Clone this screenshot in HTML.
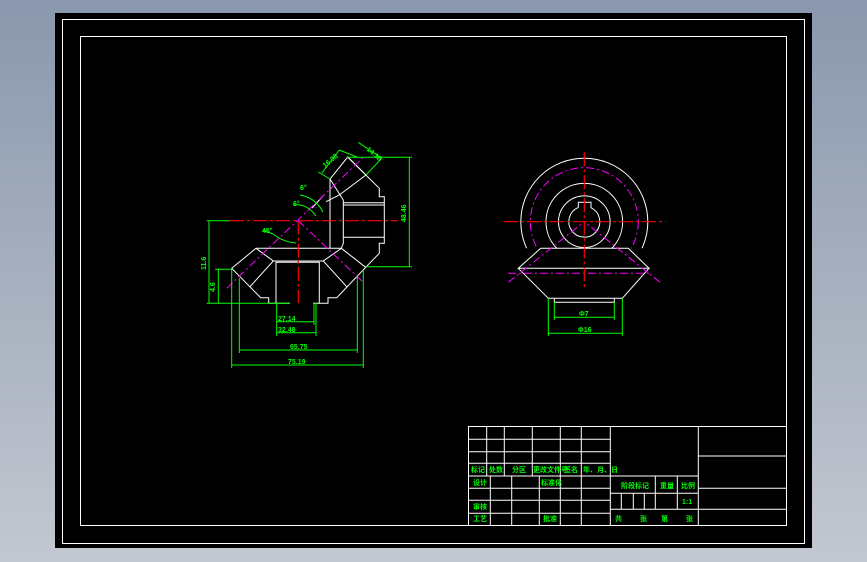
<!DOCTYPE html>
<html><head><meta charset="utf-8"><style>
html,body{margin:0;padding:0;width:867px;height:562px;overflow:hidden;background:linear-gradient(#8a98ad,#c3c7d0);}
svg{position:absolute;left:0;top:0}
text{font-family:"Liberation Sans","Noto Sans CJK SC",sans-serif;fill:#00ff00;font-weight:bold}
</style></head><body>
<svg width="867" height="562" viewBox="0 0 867 562">
<rect x="55" y="13" width="757" height="535" fill="#000"/>
<g fill="none" stroke="#fff" stroke-width="1">
<rect x="62.5" y="19.5" width="742" height="524"/>
<rect x="80.5" y="36.5" width="706" height="489"/>
</g>
<!-- LEFT VIEW -->
<g fill="none" stroke="#fff" stroke-width="1">
<polyline points="290,303.3 268.7,303.3 268.7,297.7 260.7,297.7 231.7,268.3 256,248.3 341.3,248.3 365.7,267.3 336.7,297.7 328,297.7 328,303.3 313,303.3"/>
<polyline points="256,248.3 273.3,261 250,286.7"/>
<polyline points="341.3,248.3 323.3,261 346.7,286.7"/>
<line x1="273.3" y1="261" x2="323.3" y2="261"/>
<polyline points="276,303.3 276,262.3 319.3,262.3 319.3,303.3"/>
<polyline points="365.7,267.3 379.3,253.3 379.3,243.3 384.3,243.3 384.3,196.7 379.3,196.7 379.3,188.3 347.7,157 330,179 330,248.3"/>
<line x1="347.7" y1="157" x2="366" y2="175"/>
<polyline points="366,175 339.3,195 326,201.7"/>
<polyline points="330,179 343.3,200 343.3,243.3 341.3,248.3"/>
<line x1="343.3" y1="202.7" x2="384.3" y2="202.7"/>
<line x1="343.3" y1="205" x2="384.3" y2="205"/>
<line x1="343.3" y1="237.3" x2="384.3" y2="237.3"/>
<line x1="312" y1="208" x2="323" y2="196"/>
</g>
<g stroke="#ff0000" stroke-width="1.2" stroke-dasharray="14,3,3,3">
<line x1="230" y1="220.7" x2="398" y2="220.7"/>
<line x1="298.3" y1="220.7" x2="298.3" y2="303.3"/>
</g>
<g stroke="#ff00ff" stroke-width="1" stroke-dasharray="8,3,2,3">
<line x1="226.7" y1="288.3" x2="363.3" y2="157.3"/>
<line x1="298.3" y1="220.7" x2="362.7" y2="281.7"/>
</g>
<g fill="none" stroke="#00ff00" stroke-width="1">
<line x1="206.7" y1="220.7" x2="230" y2="220.7"/>
<line x1="206.7" y1="303.3" x2="290" y2="303.3"/>
<line x1="209" y1="220.7" x2="209" y2="303.3"/>
<line x1="215" y1="269.3" x2="232" y2="269.3"/>
<line x1="218.3" y1="269.3" x2="218.3" y2="303.3"/>
<line x1="346.7" y1="157.3" x2="412" y2="157.3"/>
<line x1="365.7" y1="266.7" x2="412" y2="266.7"/>
<line x1="409.3" y1="157.3" x2="409.3" y2="266.7"/>
<line x1="231.7" y1="268.3" x2="231.7" y2="368"/>
<line x1="363.3" y1="270" x2="363.3" y2="368"/>
<line x1="239.3" y1="278" x2="239.3" y2="353"/>
<line x1="357.3" y1="276" x2="357.3" y2="353"/>
<line x1="276.7" y1="303" x2="276.7" y2="336"/>
<line x1="314" y1="303" x2="314" y2="325"/>
<line x1="316" y1="303" x2="316" y2="336"/>
<line x1="276.7" y1="321.7" x2="314" y2="321.7"/>
<line x1="276.7" y1="332.7" x2="316" y2="332.7"/>
<line x1="239.3" y1="350" x2="357.3" y2="350"/>
<line x1="231.7" y1="365" x2="363.3" y2="365"/>
<line x1="321.7" y1="173.3" x2="339.3" y2="150"/>
<line x1="330" y1="179" x2="318" y2="172"/>
<line x1="339.3" y1="150" x2="357" y2="157"/>
<line x1="358.3" y1="142.3" x2="381.7" y2="158.3"/>
<line x1="381.7" y1="158.3" x2="366" y2="175"/>
<path d="M300,195 Q316,198 323,212"/>
<path d="M293,205 Q307,203 316,216"/>
<path d="M273,234 Q283,242 296,243"/>
<line x1="263" y1="230" x2="273" y2="234"/>
</g>
<g font-size="7">
<text x="278" y="321">27.14</text>
<text x="278" y="332">32.48</text>
<text x="290" y="349">65.75</text>
<text x="288" y="364">75.19</text>
<text x="262" y="233">45°</text>
<text x="300" y="190">6°</text>
<text x="293" y="206">6°</text>
<text transform="translate(406,222) rotate(-90)">48.46</text>
<text transform="translate(206,270) rotate(-90)">11.6</text>
<text transform="translate(215,292) rotate(-90)">4.6</text>
<text transform="translate(325,168) rotate(-40)">16.98</text>
<text transform="translate(366,150) rotate(40)">14.18</text>
</g>
<!-- RIGHT VIEW -->
<defs><clipPath id="c"><rect x="480" y="140" width="200" height="108.3"/></clipPath></defs>
<g fill="none" stroke="#fff" stroke-width="1">
<g clip-path="url(#c)">
<circle cx="584.3" cy="221.7" r="63.5"/>
<circle cx="584.3" cy="221.7" r="38.3"/>
<circle cx="584.3" cy="221.7" r="25.8"/>
</g>
<path d="M578.3,207.4 L578.3,202.3 L591,202.3 L591,207.7 A15.5,15.5 0 1 1 578.3,207.4"/>
<polyline points="540.7,248.3 628.3,248.3 649,268.3 518.3,268.3 540.7,248.3"/>
<polyline points="518.3,268.3 548.3,298.3 622.3,298.3 649,268.3"/>
<polyline points="554.3,298.3 554.3,302.3 614.3,302.3 614.3,298.3"/>
</g>
<g fill="none" stroke="#ff00ff" stroke-width="1" stroke-dasharray="8,3,2,3">
<circle cx="584.3" cy="221.7" r="54" clip-path="url(#c)"/>
<line x1="508" y1="273.3" x2="650" y2="273.3"/>
<line x1="508.3" y1="282.3" x2="584.3" y2="221.7"/>
<line x1="660" y1="282.3" x2="584.3" y2="221.7"/>
</g>
<g stroke="#ff0000" stroke-width="1.2" stroke-dasharray="14,3,3,3">
<line x1="504" y1="221.7" x2="665.7" y2="221.7"/>
<line x1="584.3" y1="152.3" x2="584.3" y2="290"/>
</g>
<g stroke="#00ff00" stroke-width="1">
<line x1="548.3" y1="298.3" x2="548.3" y2="336"/>
<line x1="622.3" y1="298.3" x2="622.3" y2="336"/>
<line x1="554.3" y1="302" x2="554.3" y2="320"/>
<line x1="614.3" y1="302" x2="614.3" y2="320"/>
<line x1="554.3" y1="317.3" x2="614.3" y2="317.3"/>
<line x1="548.3" y1="333.3" x2="622.3" y2="333.3"/>
</g>
<g font-size="7"><text x="579" y="316">Φ7</text><text x="578" y="332">Φ16</text></g>
<!-- TITLE BLOCK -->
<g stroke="#fff" stroke-width="1" fill="none">
<rect x="468.5" y="426.5" width="318" height="99"/>
<line x1="468.5" y1="439.3" x2="610.3" y2="439.3"/>
<line x1="468.5" y1="451.7" x2="610.3" y2="451.7"/>
<line x1="468.5" y1="463.3" x2="610.3" y2="463.3"/>
<line x1="468.5" y1="476" x2="698.3" y2="476"/>
<line x1="468.5" y1="488.3" x2="610.3" y2="488.3"/>
<line x1="468.5" y1="500.3" x2="610.3" y2="500.3"/>
<line x1="468.5" y1="513.3" x2="610.3" y2="513.3"/>
<line x1="486.7" y1="426.5" x2="486.7" y2="476"/>
<line x1="504.3" y1="426.5" x2="504.3" y2="476"/>
<line x1="532.3" y1="426.5" x2="532.3" y2="476"/>
<line x1="560.3" y1="426.5" x2="560.3" y2="525.5"/>
<line x1="581.3" y1="426.5" x2="581.3" y2="525.5"/>
<line x1="610.3" y1="426.5" x2="610.3" y2="525.5"/>
<line x1="490.3" y1="476" x2="490.3" y2="525.5"/>
<line x1="511.7" y1="476" x2="511.7" y2="525.5"/>
<line x1="539.3" y1="476" x2="539.3" y2="525.5"/>
<line x1="698.3" y1="426.5" x2="698.3" y2="525.5"/>
<line x1="610.3" y1="493.3" x2="698.3" y2="493.3"/>
<line x1="610.3" y1="509.3" x2="698.3" y2="509.3"/>
<line x1="655.3" y1="476" x2="655.3" y2="509.3"/>
<line x1="677.3" y1="476" x2="677.3" y2="509.3"/>
<line x1="621.3" y1="493.3" x2="621.3" y2="509.3"/>
<line x1="633.3" y1="493.3" x2="633.3" y2="509.3"/>
<line x1="644.3" y1="493.3" x2="644.3" y2="509.3"/>
<line x1="698.3" y1="456" x2="786" y2="456"/>
<line x1="698.3" y1="488.3" x2="786" y2="488.3"/>
<line x1="698.3" y1="509.3" x2="786" y2="509.3"/>
</g>
<g font-size="7">
<text x="471" y="472">标记</text><text x="489" y="472">处数</text><text x="512" y="472">分区</text>
<text x="533" y="472">更改文件号</text><text x="564" y="472">签名</text><text x="583" y="472">年、月、日</text>
<text x="473" y="485">设计</text><text x="541" y="485">标准化</text>
<text x="473" y="509">审核</text><text x="473" y="521">工艺</text><text x="543" y="521">批准</text>
<text x="621" y="488">阶段标记</text><text x="660" y="488">重量</text><text x="681" y="488">比例</text>
<text x="682" y="504">1:1</text>
<text x="615" y="521">共</text><text x="640" y="521">张</text><text x="661" y="521">第</text><text x="686" y="521">张</text>
</g>
</svg>
</body></html>
